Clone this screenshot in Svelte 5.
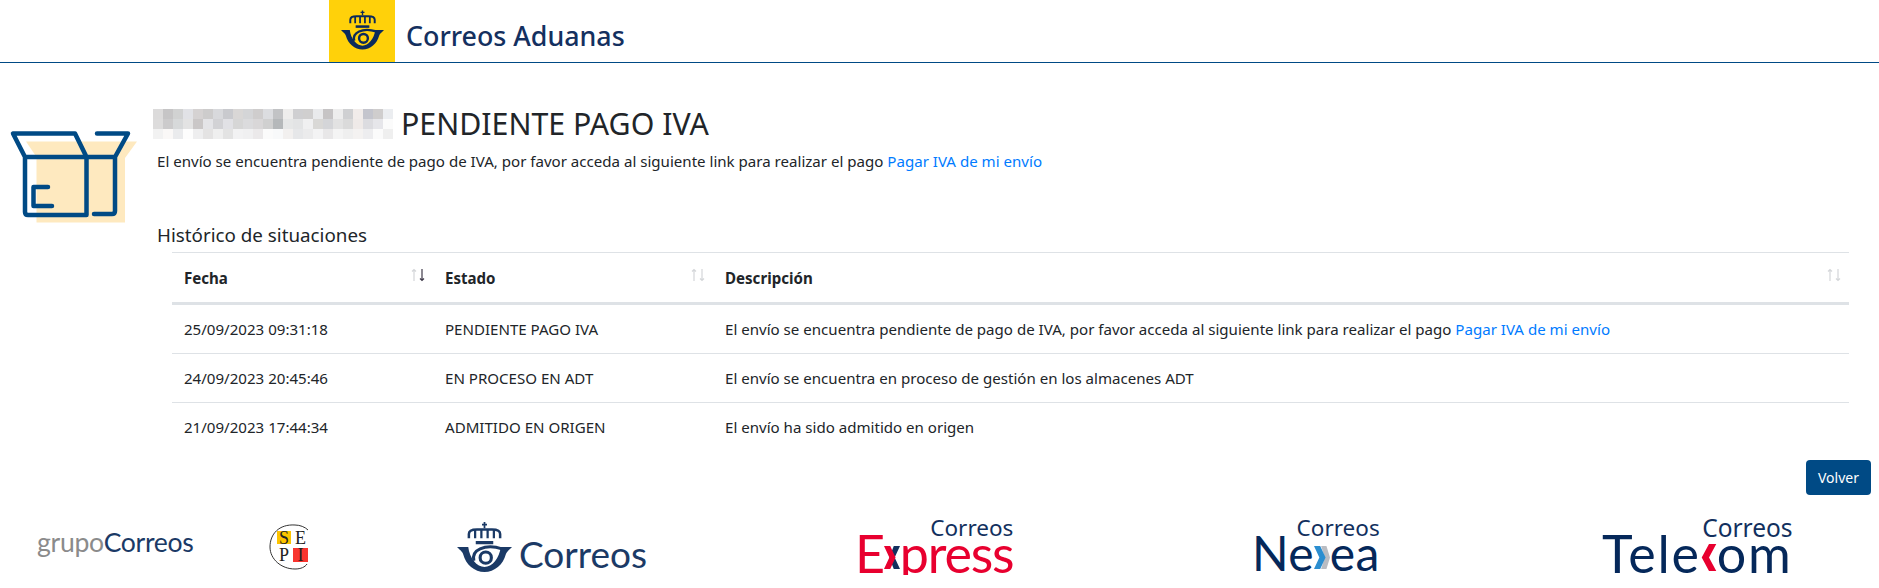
<script lang="ts">
	const pixels = [
		'dcdbdb','c6c5c6','d1d2d2','e1e2e6','d5d2d2','cdcccc','d8d9dc','c9cace','d9d7d6','d4d5d7','cfcdcd','dcdde0','c2c3c5','eeedec','cfcfd1','d0cfcf','e9eaec','c6c4c5','ededed','cfd0d2','f1ecea','c4c5cd','cfcdcd','ebedf0',
		'dddcdc','cccbcc','d7d9da','e3e3e3','cac7c7','e4e4e7','d2d2d5','e1e1e5','d6d6d6','dbdbdd','d9d7d8','d0d0d0','b5b8ba','e6e7e7','e3e4e5','f0f0f1','d9d8d6','d4d5d8','e2e2e2','dadada','efeae8','dcdce0','e6e6ea','fbfbfb',
		'f2f2f2','faf8f7','eaebed','fdfdfd','eeeeef','e4e3e3','efefef','e3e3e3','f2f2f3','f0f0f1','ebe9ea','fbfbfb','f8f9fa','f2f0ef','e6e7e9','ebebec','f3f3f4','e8e7e8','f4f4f4','efefef','f4f2f1','ededef','fbfbfb','efefef'
	];

	const rows = [
		{ fecha: '25/09/2023 09:31:18', estado: 'PENDIENTE PAGO IVA', desc: 'El envío se encuentra pendiente de pago de IVA, por favor acceda al siguiente link para realizar el pago ', link: true },
		{ fecha: '24/09/2023 20:45:46', estado: 'EN PROCESO EN ADT', desc: 'El envío se encuentra en proceso de gestión en los almacenes ADT', link: false },
		{ fecha: '21/09/2023 17:44:34', estado: 'ADMITIDO EN ORIGEN', desc: 'El envío ha sido admitido en origen', link: false }
	];
</script>

{#snippet emblem(color)}
	<svg class="emblem" viewBox="0 0 44 40" fill="none" stroke={color}>
		<path d="M22 0v5M20 2h4" stroke-width="1.4" />
		<path d="M9.500 13V9.500C9.500 7 12 6 16 6H28C32 6 34.500 7 34.500 9.500V13" stroke-width="2" />
		<path d="M14.500 6v7M19.500 6v7M24.500 6v7M29.500 6v7" stroke-width="1.800" />
		<path d="M15 16.500h14" stroke-width="2.600" />
		<path d="M0 20H9C10 29 16 36 22 36C28 36 34 29 35 20H44C41 23 39.500 24 39 26C37 34 30 40 22 40C14 40 7 34 5 26C4.500 24 3 23 0 20Z" fill={color} stroke="none" />
		<path d="M36 21.500C30 19.500 23 19.500 18.500 21.500C14 23.500 12.500 27 13.500 31" stroke-width="2.400" />
		<circle cx="23" cy="28.500" r="4.500" stroke-width="2.500" />
	</svg>
{/snippet}

{#snippet sortIcon(active)}
	<svg class="sort" viewBox="0 0 14 14" fill="none" stroke-width="1.200">
		<path d="M3 13V1.500M1 3.500L3 1.500L5 3.500" stroke="#d4d6d9" />
		<path d="M11 1V12.500M9 10.500L11 12.500L13 10.500" stroke={active ? '#3f3a4a' : '#d4d6d9'} />
	</svg>
{/snippet}

<header class="topbar">
	<div class="brand-mark">{@render emblem('#0b2a5b')}</div>
	<span class="brand-name">Correos Aduanas</span>
</header>

<main class="status">
	<svg class="box-icon" viewBox="0 130 140 100" fill="none">
		<path d="M26 141.500H137L125 158V222.500H36.500V157Z" fill="#fee9bf" />
		<path d="M25 157V212q0 3 3 3H86.500V157M25 157H115V211q0 3-3 3H94M25 157L13 133.500H75L86.500 157M97 133.500H128L115 157" stroke="#004a85" stroke-width="4.500" stroke-linecap="round" stroke-linejoin="round" />
		<path d="M48 187H33.500V206H52" stroke="#004a85" stroke-width="4.500" stroke-linecap="round" stroke-linejoin="round" />
	</svg>

	<section class="detail">
		<h2 class="title">
			<span class="redacted">
				{#each pixels as p}
					<i style="background:#{p}"></i>
				{/each}
			</span>
			PENDIENTE PAGO IVA
		</h2>
		<p class="summary">
			El envío se encuentra pendiente de pago de IVA, por favor acceda al siguiente link para realizar el pago
			<a href="#pago">Pagar IVA de mi envío</a>
		</p>

		<h3 class="history">Histórico de situaciones</h3>
		<table>
			<thead>
				<tr>
					<th class="col-fecha">Fecha{@render sortIcon(true)}</th>
					<th class="col-estado">Estado{@render sortIcon(false)}</th>
					<th>Descripción{@render sortIcon(false)}</th>
				</tr>
			</thead>
			<tbody>
				{#each rows as row}
					<tr>
						<td>{row.fecha}</td>
						<td>{row.estado}</td>
						<td>{row.desc}{#if row.link}<a href="#pago">Pagar IVA de mi envío</a>{/if}</td>
					</tr>
				{/each}
			</tbody>
		</table>
	</section>
</main>

<div class="actions">
	<button type="button">Volver</button>
</div>

<footer class="logos">
	<div class="grupo"><span class="grey">grupo</span>Correos</div>

	<svg class="sepi" viewBox="0 0 44 48">
		<path d="M26 3C10 2 1 12 1 25C1 37 12 47 26 47C32 47 36 45 38 42M26 3C31 3 36 5 39 8" fill="none" stroke="#333" />
		<rect x="8" y="9" width="14" height="13" fill="#fdc400" />
		<rect x="24" y="26" width="15" height="14" fill="#f8352f" />
		<text x="15" y="22" class="sepi-letter">S</text>
		<text x="31.500" y="22" class="sepi-letter">E</text>
		<text x="15" y="39" class="sepi-letter">P</text>
		<text x="31.500" y="39" class="sepi-letter">I</text>
	</svg>

	<div class="correos">
		{@render emblem('#1b3a66')}
		<span>Correos</span>
	</div>

	<div class="stacked express">
		<span class="small">Correos</span>
		<span class="big">E<svg class="chev" viewBox="0 0 18 26"><path d="M11 0h7l-6 13 6 13h-7l-5-13z" fill="#12305e" /><path d="M0 0h7l6 13-6 13H0l6-13z" fill="#e8002f" /></svg>press</span>
	</div>

	<div class="stacked nexea">
		<span class="small">Correos</span>
		<span class="big">Ne<svg class="chev" viewBox="0 0 18 26"><path d="M8 0h6l4 13-4 13H8l4-13z" fill="#b9bcc2" /><path d="M0 0h7l6 13-6 13H0l6-13z" fill="#2b8ed0" /></svg>ea</span>
	</div>

	<div class="stacked telekom">
		<span class="small">Correos</span>
		<span class="big">Tele<svg class="chev" viewBox="0 0 14 26"><path d="M14 0H7L0 13l7 13h7L7 13z" fill="#e8002f" /></svg>om</span>
	</div>
</footer>

<style>
	:global(body) {
		margin: 0;
		background: #fff;
		color: #212529;
		font-family: 'Noto Sans', 'Open Sans', sans-serif;
		font-size: 15.080px;
	}

	.topbar {
		display: flex;
		align-items: center;
		height: 62px;
		padding-left: 329px;
		border-bottom: 1px solid #004a85;
	}

	.brand-mark {
		display: flex;
		align-items: center;
		justify-content: center;
		width: 66px;
		height: 62px;
		background: #ffd10a;
	}

	.brand-mark .emblem {
		width: 43px;
		height: 40px;
		margin-bottom: 2px;
	}

	.brand-name {
		margin: 8px 0 0 11px;
		font-size: 26.800px;
		font-weight: 500;
		color: #14305f;
	}

	.status {
		display: flex;
		align-items: flex-start;
		padding-right: 30px;
	}

	.box-icon {
		flex: none;
		width: 140px;
		height: 100px;
		margin: 67px 17px 0 0;
	}

	.detail {
		flex: 1;
		min-width: 0;
		padding-top: 41px;
	}

	.title {
		display: flex;
		align-items: center;
		gap: 8px;
		margin: 0 0 0 -4px;
		font-size: 30.300px;
		font-weight: 400;
		line-height: 40px;
	}

	.redacted {
		display: grid;
		grid-template-columns: repeat(24, 10px);
		grid-auto-rows: 10px;
	}

	.redacted i {
		display: block;
	}

	.summary {
		margin: 7px 0 0;
		line-height: 20px;
	}

	a {
		color: #007bff;
		text-decoration: none;
	}

	.history {
		margin: 52px 0 0;
		font-size: 18.800px;
		font-weight: 400;
		line-height: 24px;
	}

	table {
		width: calc(100% - 15px);
		margin: 5px 0 0 15px;
		border-collapse: collapse;
		border-top: 1px solid #dee2e6;
	}

	th {
		position: relative;
		height: 49px;
		padding: 0 12px;
		text-align: left;
		font-weight: 700;
		border-bottom: 3px solid #dee2e6;
	}

	.col-fecha {
		width: 237px;
	}

	.col-estado {
		width: 256px;
	}

	td {
		height: 48px;
		padding: 0 12px;
		border-bottom: 1px solid #dee2e6;
	}

	tbody tr:last-child td {
		border-bottom: 0;
	}

	.sort {
		position: absolute;
		top: 15px;
		right: 8px;
		width: 14px;
		height: 14px;
	}

	.actions {
		display: flex;
		justify-content: flex-end;
		padding: 9px 8px 0 0;
	}

	button {
		width: 65px;
		height: 35px;
		border: 0;
		border-radius: 4px;
		background: #004a85;
		color: #fff;
		font: inherit;
		font-size: 14px;
	}

	.logos {
		display: grid;
		grid-template-columns: 232px 188px 398px 397px 350px auto;
		align-items: end;
		height: 60px;
		padding: 20px 0 0 37px;
		color: #1b3a66;
	}

	.grupo {
		font-family: Lato, sans-serif;
		font-size: 26.600px;
		letter-spacing: -0.3px;
		line-height: 30px;
		margin-bottom: 18px;
	}

	.grey {
		color: #8b8b8b;
	}

	.sepi {
		width: 44px;
		height: 48px;
		margin-bottom: 5px;
	}

	.sepi-letter {
		font-family: 'Liberation Serif', serif;
		font-size: 18px;
		fill: #222;
		text-anchor: middle;
	}

	.correos {
		display: flex;
		align-items: flex-end;
		gap: 7px;
		margin-bottom: 3px;
		font-family: Lato, sans-serif;
		font-size: 37px;
		line-height: 36px;
	}

	.correos .emblem {
		width: 55px;
		height: 50px;
		flex: none;
	}

	.stacked {
		display: inline-flex;
		flex-direction: column;
		align-items: flex-end;
		justify-self: start;
	}

	.small {
		font-size: 22.500px;
		line-height: 18px;
		margin-bottom: -3px;
		transform: translateY(3px);
		color: #12305e;
	}

	.big {
		display: flex;
		align-items: center;
		font-family: Lato, sans-serif;
		font-size: 52px;
		line-height: 44px;
	}

	.chev {
		width: 16px;
		height: 27px;
		margin-top: 9px;
	}

	.express .big {
		color: #e8002f;
		letter-spacing: -1.200px;
	}

	.nexea .big,
	.telekom .big {
		color: #05285a;
	}

	.nexea .big {
		font-size: 48px;
		letter-spacing: 0.300px;
	}

	.telekom .small {
		font-size: 24.500px;
	}

	.telekom .big {
		letter-spacing: 1.800px;
	}
</style>
